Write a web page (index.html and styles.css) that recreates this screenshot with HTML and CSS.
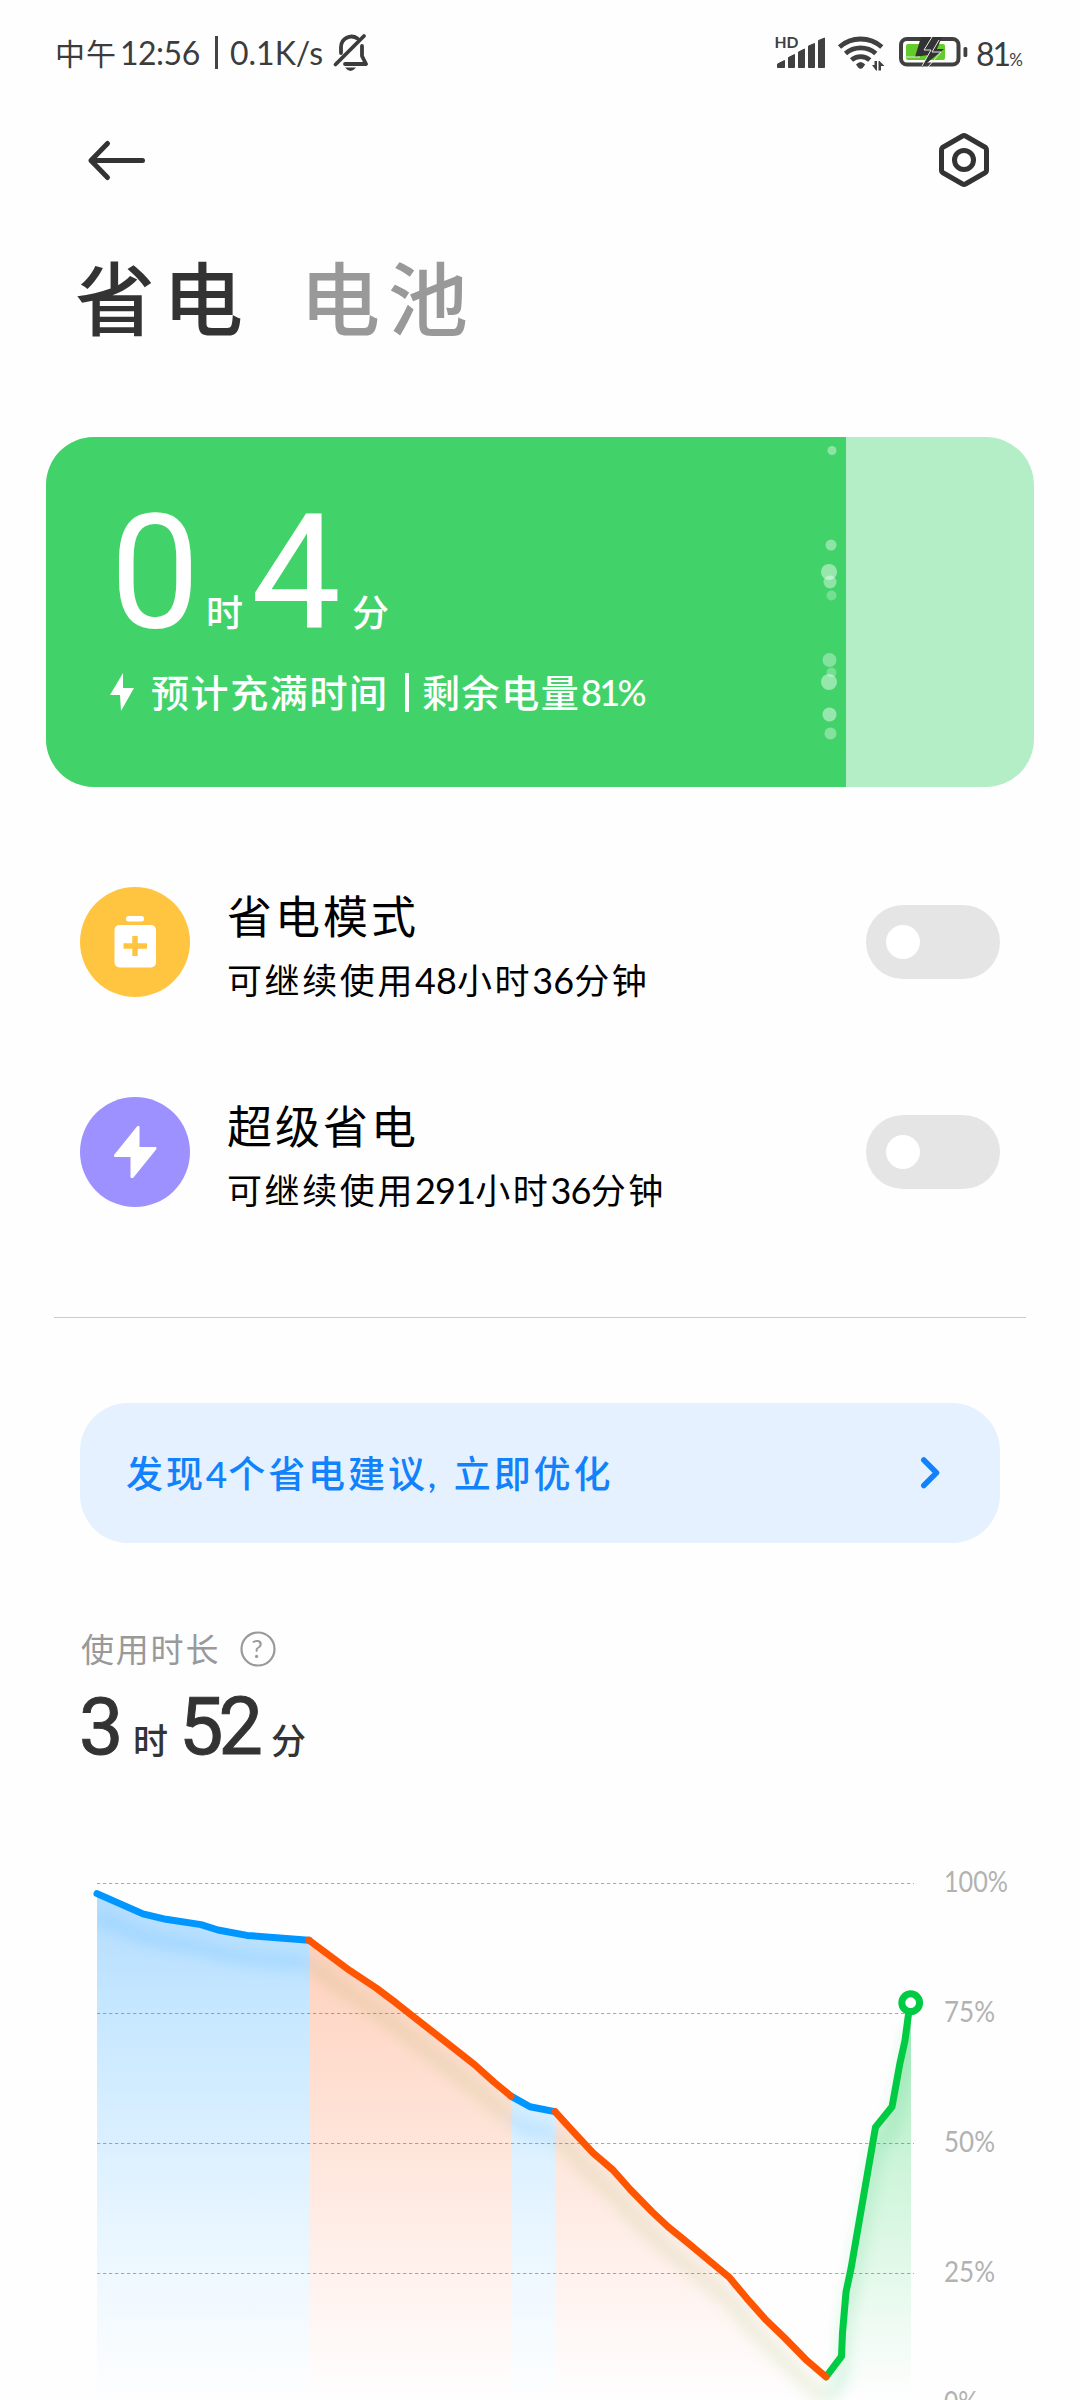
FILE: index.html
```html
<!DOCTYPE html>
<html lang="zh-CN">
<head>
<meta charset="utf-8">
<title>省电</title>
<link rel="stylesheet" href="styles.css">
</head>
<body>
<div class="screen">
  <header class="status">
    <div class="status-left">
      <span class="ampm">中午</span><span class="clock">12:56</span><span class="bar"></span><span class="speed">0.1K/s</span>
      <svg class="bell" width="38" height="40" viewBox="332 33 38 40" fill="none" stroke="#3c3c3c" stroke-width="3.8" stroke-linecap="round" stroke-linejoin="round">
        <path d="M341 53V47A10.500 10.500 0 0 1 357.500 38.500M362 46V56L366 64H345"/>
        <path d="M364 36L335.500 64.500"/>
        <path d="M345 67.500Q350.500 74.500 356 67.500Z" fill="#3c3c3c" stroke="none"/>
      </svg>
    </div>
    <div class="status-right">
      <svg width="204" height="44" viewBox="764 30 204 44" fill="#404040">
        <text class="hd" x="774.500" y="48" textLength="24" lengthAdjust="spacingAndGlyphs">HD</text>
        <path d="M777.500 67.500V64L784.500 60.500V67.500ZM788.500 67.500V57.500L794.500 54.500V67.500ZM798.500 67.500V52L804.500 49V67.500ZM808.500 67.500V46L814.500 43.500V67.500ZM818.500 67.500V40.500L824.500 38V67.500Z" stroke="#404040" stroke-width="1" stroke-linejoin="round"/>
        <g fill="none" stroke="#404040" stroke-width="4.800">
          <path d="M839.500 47A32 32 0 0 1 881.800 47"/>
          <path d="M845.500 53.500A23 23 0 0 1 875.800 53.500"/>
          <path d="M851.500 60A14 14 0 0 1 869.800 60"/>
        </g>
        <path d="M856 64.500Q860.600 59.500 865.200 64.500L863 67.500Q860.600 70 858.200 67.500Z"/>
        <path d="M872 65H874.500V61H877V70.500H876ZM878.500 70.500V61H879.500L884.500 66H881V70.500Z"/>
        <rect x="901" y="39" width="57.500" height="25.500" rx="6" fill="none" stroke="#404040" stroke-width="4"/>
        <rect x="906" y="44" width="39" height="16" rx="2" fill="#63cc2a"/>
        <rect x="963.500" y="47" width="3.800" height="10" rx="1.500"/>
        <path d="M921 37H942L937 49H944L922 67L928 55L915 57Z" fill="#333"/>
        <path d="M932 37L924 50H931L922 66M939 40L932 52H941L928 67M904 57H920" fill="none" stroke="#e8e8e8" stroke-width="1"/>
      </svg><span class="pct">81<small>%</small></span>
    </div>
  </header>

  <nav class="toolbar">
    <svg class="back" width="62" height="44" viewBox="86 138 62 44" fill="none" stroke="#333" stroke-width="5" stroke-linecap="round" stroke-linejoin="round"><path d="M142.500 160.500H91M107.500 143.500L91 160.500L107.500 177.500"/></svg>
    <svg width="52" height="56" viewBox="938 132 52 56" fill="none" stroke="#333" stroke-width="5" stroke-linejoin="round"><path d="M962.500 136Q964 135.200 965.500 136L985.500 147.500Q986.500 148.500 986.500 150V170.500Q986.500 172 985.500 172.500L965.500 184Q964 184.800 962.500 184L942.500 172.500Q941.500 172 941.500 170.500V150Q941.500 148.500 942.500 147.500Z"/><circle cx="964" cy="160" r="9.500"/></svg>
  </nav>

  <div class="tabs"><h1>省电</h1><span>电池</span></div>

  <section class="battery">
    <div class="charge">
      <div class="eta"><b class="n0">0</b><i class="u0">时</i><b class="n4">4</b><i class="u4">分</i></div>
      <div class="hint">
        <svg width="26" height="40" viewBox="110 672 26 40" fill="#fff"><path d="M123 673L110 695H120L121 711L134 688H123Z"/></svg>
        <span class="h1t">预计充满时间</span><em></em><span class="h2t">剩余电量</span><span class="h3t">81%</span>
      </div>
    </div>
    <svg class="bubbles" width="20" height="350" viewBox="820 437 20 350" fill="#fff">
      <circle cx="832" cy="450.500" r="4.500" opacity=".4"/><circle cx="831" cy="545" r="5.500" opacity=".4"/>
      <circle cx="829" cy="572" r="8" opacity=".45"/><circle cx="830" cy="582" r="6.500" opacity=".4"/>
      <circle cx="831.500" cy="595.500" r="5" opacity=".27"/><circle cx="829.500" cy="660" r="7" opacity=".35"/>
      <circle cx="831.500" cy="672.500" r="5" opacity=".27"/><circle cx="829" cy="682" r="8" opacity=".45"/>
      <circle cx="829.500" cy="714.500" r="7" opacity=".45"/><circle cx="830.500" cy="733.500" r="6" opacity=".35"/>
    </svg>
  </section>

  <section class="modes">
    <div class="mode">
      <svg class="icon" width="110" height="110" viewBox="80 887 110 110"><circle cx="135" cy="942" r="55" fill="#ffc540"/><rect x="126" y="916" width="18" height="5.500" rx="2.500" fill="#fff"/><rect x="114.500" y="925" width="41.500" height="42.500" rx="5" fill="#fff"/><path d="M135 936V956M123.500 946H147" stroke="#ffc540" stroke-width="5.500"/></svg>
      <div class="label"><h2>省电模式</h2><p>可继续使用<s class="wide">48</s>小时<s class="wide">36</s>分钟</p></div>
      <div class="switch"></div>
    </div>
    <div class="mode">
      <svg class="icon" width="110" height="110" viewBox="80 1097 110 110"><circle cx="135" cy="1152" r="55" fill="#9c91ff"/><path d="M138 1127L115 1155.500V1156H131.500V1177H132.500L155.500 1148.500V1148H138.500V1127Z" fill="#fff" stroke="#fff" stroke-width="2" stroke-linejoin="round"/></svg>
      <div class="label"><h2>超级省电</h2><p>可继续使用<s>291</s>小时<s>36</s>分钟</p></div>
      <div class="switch"></div>
    </div>
  </section>

  <hr>

  <a class="tip"><span>发现<s>4</s>个省电建议<s class="comma">,</s>立即优化</span>
    <svg width="22" height="34" viewBox="919 1456 22 34" fill="none" stroke="#1182fb" stroke-width="5.500" stroke-linecap="round" stroke-linejoin="round"><path d="M923.800 1460L936.500 1472.800L923.800 1485.500"/></svg>
  </a>

  <section class="usage">
    <div class="caption">使用时长
      <svg width="38" height="38" viewBox="0 0 38 38"><circle cx="19" cy="20" r="16.500" fill="none" stroke="#999" stroke-width="2.200"/><text x="19" y="29" text-anchor="middle">?</text></svg>
    </div>
    <div class="total"><b class="n3">3</b><i class="u3">时</i><b class="n52">52</b><i class="u52">分</i></div>
  </section>

  <svg class="chart" width="1080" height="560" viewBox="0 1840 1080 560">
    <defs>
      <linearGradient id="gb" gradientUnits="userSpaceOnUse" x1="0" y1="1893" x2="0" y2="2400"><stop offset="0" stop-color="#b2dcff"/><stop offset=".25" stop-color="#c8e8ff"/><stop offset=".68" stop-color="#e9f6ff"/><stop offset="1" stop-color="#fefefe"/></linearGradient>
      <linearGradient id="go" gradientUnits="userSpaceOnUse" x1="0" y1="1940" x2="0" y2="2400"><stop offset="0" stop-color="#ffd0bc"/><stop offset=".4" stop-color="#fee3d7"/><stop offset=".72" stop-color="#fff1ed"/><stop offset="1" stop-color="#fefefe"/></linearGradient>
      <linearGradient id="gg" gradientUnits="userSpaceOnUse" x1="0" y1="2003" x2="0" y2="2400"><stop offset="0" stop-color="#a9ecbf"/><stop offset=".45" stop-color="#d0f5dc"/><stop offset="1" stop-color="#fefefe"/></linearGradient>
      <filter id="soft" filterUnits="userSpaceOnUse" x="50" y="1840" width="950" height="600"><feGaussianBlur stdDeviation="7"/></filter>
      <clipPath id="plot"><rect x="97" y="1840" width="814" height="560"/></clipPath>
      <path id="idle" d="M97 1893.600L143 1913.900L166 1919.300L201 1924.600L218 1930L247 1935.400L309 1940.200M511 2096.100L530 2106.800L555 2111.600"/>
      <path id="drain" d="M309 1940.200L350 1970.700L376 1987.900L396 2002.900L449 2044.600L475 2065L494 2082.100L511 2096.100M555 2111.600L573 2131.400L593 2152.900L613 2170L630 2189.300L652 2211.800L668 2226.800L688 2242.900L729 2277.100L747 2298.600L765 2318.900L785 2338.200L807 2360.700L826 2376.800"/>
      <path id="charging" d="M826 2376.800L841.500 2356.400L842.500 2332.900L846 2292.100L851 2268.600L875.500 2127.100L892 2106.800L900 2062.900L905 2040.400L910 2003"/>
    </defs>
    <path fill="url(#gb)" d="M97 1893.600L143 1913.900L166 1919.300L201 1924.600L218 1930L247 1935.400L309 1940.200V2400H97ZM511 2096.100L530 2106.800L555 2111.600V2400H511Z"/>
    <path fill="url(#go)" d="M309 1940.200L350 1970.700L376 1987.900L396 2002.900L449 2044.600L475 2065L494 2082.100L511 2096.100V2400H309ZM555 2111.600L573 2131.400L593 2152.900L613 2170L630 2189.300L652 2211.800L668 2226.800L688 2242.900L729 2277.100L747 2298.600L765 2318.900L785 2338.200L807 2360.700L826 2376.800V2400H555Z"/>
    <path fill="url(#gg)" d="M826 2376.800L841.500 2356.400L842.500 2332.900L846 2292.100L851 2268.600L875.500 2127.100L892 2106.800L900 2062.900L905 2040.400L911 2003V2400H826Z"/>
    <g clip-path="url(#plot)" opacity=".13">
      <g fill="none" stroke-width="13" filter="url(#soft)">
        <use href="#idle" y="23" stroke="#0096ff"/><use href="#drain" y="23" stroke="#70a020"/><use href="#charging" y="23" stroke="#00b848"/>
      </g>
    </g>
    <g stroke="#707070" stroke-opacity=".6" stroke-dasharray="3.300 2.700"><path d="M97 1883.500H914M97 2013.500H914M97 2143.500H914M97 2273.500H914"/></g>
    <g fill="none" stroke-width="7" stroke-linejoin="round" stroke-linecap="round">
      <use href="#idle" stroke="#0096ff"/><use href="#charging" stroke="#00cb42"/><use href="#drain" stroke="#ff5500"/>
    </g>
    <circle cx="910.700" cy="2002.700" r="8.900" fill="#fff" stroke="#00cb42" stroke-width="7"/>
    <g class="axis">
      <text x="944" y="1892" textLength="64" lengthAdjust="spacingAndGlyphs">100%</text><text x="944" y="2022" textLength="51" lengthAdjust="spacingAndGlyphs">75%</text><text x="944" y="2152" textLength="51" lengthAdjust="spacingAndGlyphs">50%</text><text x="944" y="2282" textLength="51" lengthAdjust="spacingAndGlyphs">25%</text><text x="944" y="2412" textLength="34" lengthAdjust="spacingAndGlyphs">0%</text>
    </g>
  </svg>
</div>
</body>
</html>
```
FILE: styles.css
```css
* { box-sizing: border-box; margin: 0; padding: 0; }
body { background: #fefefe; font-family: Lato, "Noto Sans CJK SC", sans-serif; color: #333; }
i, s { font-style: normal; text-decoration: none; }
svg { display: block; flex: none; }
.screen { width: 1080px; height: 2400px; overflow: hidden; background: #fefefe; }

.status { height: 108px; display: flex; justify-content: space-between; padding: 33px 54px 0 55px; color: #3c3c3c; line-height: 40px; }
.status-left { display: flex; font-size: 32px; height: 40px; }
.ampm { font-size: 30px; width: 65px; letter-spacing: 1px; white-space: nowrap; }
.clock { width: 83px; letter-spacing: -.5px; }
.bar { width: 3px; height: 33px; margin: 3px 12px 0 12px; background: #444; }
.speed { width: 102px; }
.status-right { display: flex; align-items: flex-start; }
.status-right svg { margin-top: -3px; }
.hd { font: 700 16px Lato, sans-serif; }
.pct { width: 58px; padding-left: 8px; font-size: 32px; line-height: 42px; letter-spacing: -2px; white-space: nowrap; }
.pct small { font-size: 17px; letter-spacing: 0; }

.toolbar { height: 104px; padding: 24px 90px 0 86px; display: flex; justify-content: space-between; align-items: flex-start; }
.back { margin-top: 6px; }

.tabs { height: 225px; padding: 28px 0 0 75px; display: flex; font-size: 80px; line-height: 116px; letter-spacing: 8px; }
.tabs h1 { width: 225px; font-size: 80px; font-weight: 500; }
.tabs span { color: #999; font-weight: 500; }

.battery { position: relative; margin: 0 46px; height: 350px; border-radius: 48px; overflow: hidden; background: #b3eec6; color: #fff; }
.charge { width: 800px; height: 350px; background: #41d369; padding: 60px 0 0 64px; }
.bubbles { position: absolute; left: 774px; top: 0; }
.eta, .total { display: flex; align-items: baseline; }
.eta { height: 151px; line-height: 151px; }
.eta b { font: 400 160px/151px Roboto, sans-serif; }
.eta i { font-size: 37px; font-weight: 500; }
.n0 { width: 96px; }
.u0 { width: 45px; }
.n4 { width: 101px; }
.hint { display: flex; align-items: center; height: 56px; margin-top: 16px; font-size: 38px; font-weight: 500; line-height: 56px; }
.hint em { width: 4px; height: 39px; background: #fff; margin-right: 13px; }
.h1t { margin-left: 15px; width: 254px; letter-spacing: 1.6px; }
.h2t { width: 159px; letter-spacing: 1.6px; }
.h3t { font-size: 36px; letter-spacing: -2.6px; }

.modes { padding-top: 80px; height: 530px; }
.mode { height: 210px; padding: 20px 80px 0; display: flex; align-items: flex-start; color: #000; }
.label { flex: 1; padding-left: 37px; height: 130px; }
.label h2 { font-size: 45px; font-weight: 400; letter-spacing: 3px; line-height: 60px; }
.label p { font-size: 35px; letter-spacing: 2.6px; line-height: 60px; margin-top: 3px; }
.label s { letter-spacing: -.8px; font-size: 36px; }
.label .wide { letter-spacing: .1px; }
.switch { width: 134px; height: 74px; margin-top: 18px; border-radius: 37px; background: #e5e5e5; padding: 20px; }
.switch::before { content: ""; display: block; width: 34px; height: 34px; border-radius: 50%; background: #fff; }

hr { border: 0; height: 1px; margin: 0 54px 85px; background: #ccc; }
.tip { margin: 0 80px; height: 140px; border-radius: 48px; background: #e5f1ff; color: #1182fb; display: flex; justify-content: space-between; align-items: center; padding: 0 59px 0 46px; font-size: 37px; font-weight: 500; letter-spacing: 2.9px; }
.tip span { padding-bottom: 2px; }
.tip s { letter-spacing: 1px; }
.comma { display: inline-block; width: 26px; }
.usage { padding: 75px 0 0 81px; height: 297px; }
.caption { display: flex; align-items: center; height: 60px; color: #999; font-size: 33px; letter-spacing: 1.8px; gap: 19px; }
.caption text { font: 25px Lato, sans-serif; fill: #999; }
.total { height: 82px; line-height: 82px; margin-top: 8px; }
.total b { font: 400 79px/82px Roboto, sans-serif; -webkit-text-stroke: 1px #333; }
.total i { font-size: 35px; font-weight: 500; }
.n3 { width: 54px; margin-left: -2px; }
.u3 { width: 46px; }
.n52 { width: 92px; letter-spacing: -5px; }
.axis { font: 28.5px Lato, sans-serif; fill: #b2b2b2; }
```
